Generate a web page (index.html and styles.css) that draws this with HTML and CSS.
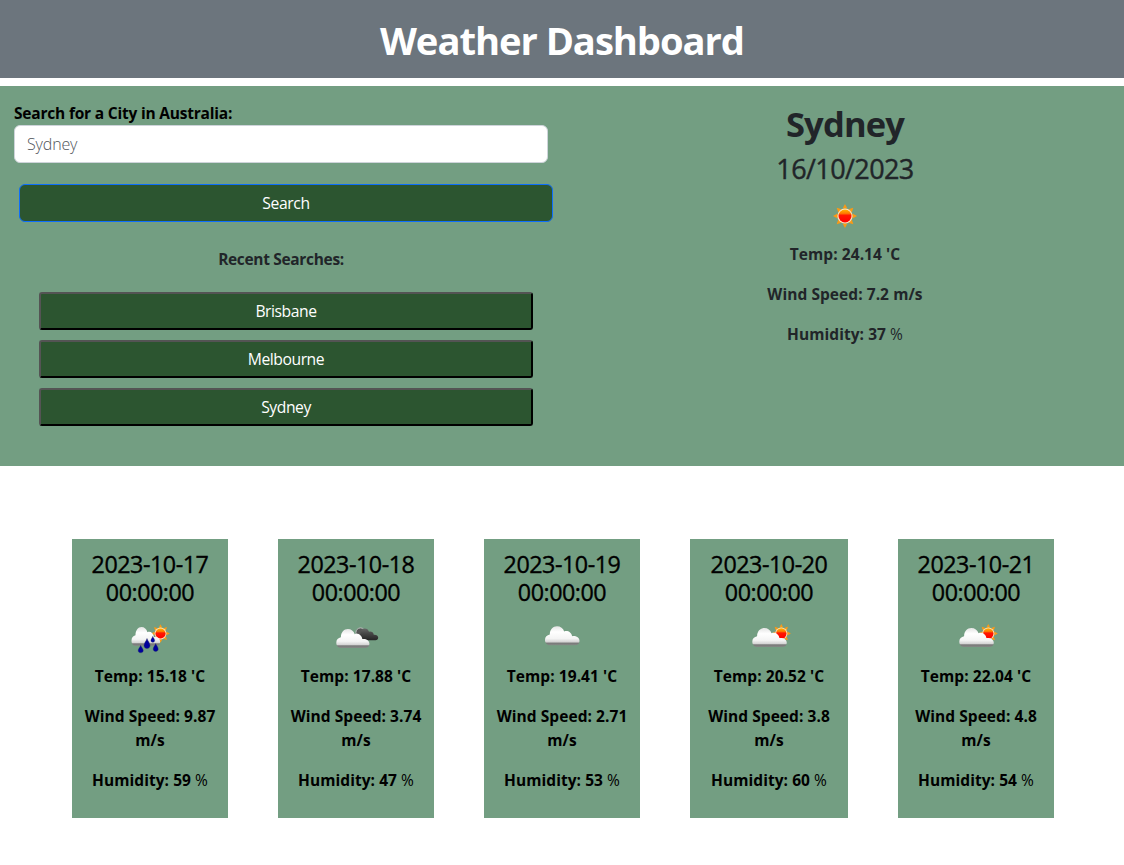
FILE: index.html
```html
<!DOCTYPE html>
<html lang="en">
<head>
<meta charset="utf-8">
<title>Weather Dashboard</title>
<link rel="stylesheet" href="styles.css">
</head>
<body>
<svg class="defs" width="0" height="0" aria-hidden="true">
  <defs>
    <linearGradient id="white" x1="0" y1="0" x2="0" y2="1"><stop offset="0" stop-color="#e4e4e4"/><stop offset=".3" stop-color="#fff"/><stop offset=".65" stop-color="#f4f4f4"/><stop offset=".84" stop-color="#d2d2d2"/><stop offset=".88" stop-color="#777"/><stop offset="1" stop-color="#858a86"/></linearGradient>
    <linearGradient id="dark" x1="0" y1="0" x2="0" y2="1"><stop offset="0" stop-color="#666"/><stop offset=".4" stop-color="#484848"/><stop offset="1" stop-color="#252525"/></linearGradient>
    <linearGradient id="core" x1="0" y1="0" x2="0" y2="1"><stop offset="0" stop-color="#ffb400"/><stop offset=".3" stop-color="#ff7a00"/><stop offset=".45" stop-color="#ff1800"/><stop offset="1" stop-color="#f00"/></linearGradient>
    <g id="sun">
      <path fill="#fb9a14" d="M0-12 2.4-7.4-2.4-7.4ZM0 12 2.4 7.4-2.4 7.4ZM-12 0-7.4-2.4-7.4 2.4ZM12 0 7.4-2.4 7.4 2.4ZM-8.3-8.3-3.6-6.8-6.8-3.6ZM8.3-8.3 3.6-6.8 6.8-3.6ZM-8.3 8.3-3.6 6.8-6.8 3.6ZM8.3 8.3 3.6 6.8 6.8 3.6Z"/>
      <circle r="7.6" fill="#ffe4c0"/><circle r="6.5" fill="url(#core)"/>
    </g>
    <path id="cloud" d="M5.5 19C2 19 0 16.700 0 13.700 0 10.700 2 8.800 4.800 8.300 4.800 3.200 8 0 12 0 15.500 0 18.200 2 19.200 5.200 22.800 4 26.500 6.200 27.100 10 31 9.500 34.500 11.500 34.500 14.700 34.500 17.500 32.500 19 30 19Z"/>
    <path id="drop" fill="#00009c" stroke="#25305f" stroke-width=".4" d="M0-5C.8-2.300 3-.5 3 2 3 4 1.600 5 0 5S-3 4-3 2C-3-.5-.8-2.300 0-5Z"/>
  </defs>
</svg>
<header class="page-header"><h1 class="title">Weather Dashboard</h1></header>
<main>
  <section class="overview">
    <div class="search">
      <label class="label" for="city">Search for a City in Australia:</label>
      <input class="city-input" id="city" type="text" placeholder="Sydney">
      <button class="search-button">Search</button>
      <p class="recent-title">Recent Searches:</p>
      <div class="recent">
        <button class="recent-button">Brisbane</button>
        <button class="recent-button">Melbourne</button>
        <button class="recent-button">Sydney</button>
      </div>
    </div>
    <div class="current">
      <h2 class="city">Sydney</h2>
      <h3 class="today">16/10/2023</h3>
      <svg class="icon" viewBox="0 0 50 50"><use href="#sun" x="25" y="25"/></svg>
      <p class="fact">Temp: 24.14 'C</p>
      <p class="fact">Wind Speed: 7.2 m/s</p>
      <p class="fact">Humidity: 37 <span class="percent">%</span></p>
    </div>
  </section>
  <section class="forecast">
    <article class="card">
      <h4 class="date">2023-10-17 00:00:00</h4>
      <svg class="icon" viewBox="0 0 50 50"><use href="#sun" transform="translate(35.500 22.500) scale(.78)"/><use href="#cloud" fill="url(#white)" transform="translate(6.500 16) scale(.83 1)"/><use href="#drop" transform="translate(22 32.500)"/><use href="#drop" transform="translate(15.700 38) scale(.85 .75)"/><use href="#drop" transform="translate(30.700 36.500) scale(.85 .8)"/><use href="#drop" transform="translate(27.800 28.200) scale(.65 .6)"/></svg>
      <p class="fact">Temp: 15.18 'C</p>
      <p class="fact">Wind Speed: 9.87 m/s</p>
      <p class="fact">Humidity: 59 <span class="percent">%</span></p>
    </article>
    <article class="card">
      <h4 class="date">2023-10-18 00:00:00</h4>
      <svg class="icon" viewBox="0 0 50 50"><circle cx="29.500" cy="21.500" r="4.600" fill="#555" stroke="#bbb"/><use href="#cloud" fill="url(#dark)" transform="translate(26.500 17.500) scale(.6 .62)"/><use href="#cloud" fill="url(#white)" transform="translate(5.300 18) scale(.96 1)"/></svg>
      <p class="fact">Temp: 17.88 'C</p>
      <p class="fact">Wind Speed: 3.74 m/s</p>
      <p class="fact">Humidity: 47 <span class="percent">%</span></p>
    </article>
    <article class="card">
      <h4 class="date">2023-10-19 00:00:00</h4>
      <svg class="icon" viewBox="0 0 50 50"><use href="#cloud" fill="url(#white)" transform="translate(8 15.200)"/></svg>
      <p class="fact">Temp: 19.41 'C</p>
      <p class="fact">Wind Speed: 2.71 m/s</p>
      <p class="fact">Humidity: 53 <span class="percent">%</span></p>
    </article>
    <article class="card card-wide">
      <h4 class="date">2023-10-20 00:00:00</h4>
      <svg class="icon" viewBox="0 0 50 50"><use href="#sun" transform="translate(37.300 22.500) scale(.8)"/><use href="#cloud" fill="url(#white)" transform="translate(8.300 17)"/></svg>
      <p class="fact">Temp: 20.52 'C</p>
      <p class="fact">Wind Speed: 3.8 m/s</p>
      <p class="fact">Humidity: 60 <span class="percent">%</span></p>
    </article>
    <article class="card">
      <h4 class="date">2023-10-21 00:00:00</h4>
      <svg class="icon" viewBox="0 0 50 50"><use href="#sun" transform="translate(37.300 22.500) scale(.8)"/><use href="#cloud" fill="url(#white)" transform="translate(8.300 17)"/></svg>
      <p class="fact">Temp: 22.04 'C</p>
      <p class="fact">Wind Speed: 4.8 m/s</p>
      <p class="fact">Humidity: 54 <span class="percent">%</span></p>
    </article>
  </section>
</main>
</body>
</html>
```
FILE: styles.css
```css
* { box-sizing: border-box; }
body { margin: 0; background: #fff; color: #212529; font: 16px/24px "Open Sans", "Noto Sans", sans-serif; }
h1, h2, h3, h4, p { margin: 0; }
.defs { position: absolute; }
.page-header { height: 78px; padding-top: 17px; background: #6c757d; text-align: center; }
.title { color: #fff; font-size: 38.2px; line-height: 46px; font-weight: 700; letter-spacing: -1.05px; }
.overview { display: flex; height: 380px; margin-top: 8px; background: #739e82; }
.search { display: flex; flex-direction: column; width: 562px; padding: 15px 9px 0 14px; }
.label { color: #000; font-size: 15.5px; font-weight: 700; letter-spacing: -.2px; }
.city-input { width: 534px; height: 38px; padding: 6px 12px; border: 1px solid #ced4da; border-radius: 6px; background: #fff; font: 300 16px/24px "Open Sans", sans-serif; letter-spacing: -.15px; }
.city-input::placeholder { color: #50545a; opacity: 1; }
.search-button { width: 534px; height: 38px; margin: 21px 0 0 5px; padding: 0; border: 1px solid #0d6efd; border-radius: 6px; background: #2c5530; color: #fff; font: 15.7px/24px "Open Sans", sans-serif; letter-spacing: -.35px; }
.recent-title { width: 534px; margin: 25px 0 21px; text-align: center; font-size: 15.5px; font-weight: 700; letter-spacing: -.33px; }
.recent { display: flex; flex-direction: column; gap: 10px; padding-left: 25px; }
.recent-button { width: 494px; height: 38px; padding: 0; border: 2px outset #000; border-radius: 3px; background: #2c5530; color: #fff; font: 15.7px/24px "Open Sans", sans-serif; letter-spacing: -.45px; }
.current { display: flex; flex-direction: column; align-items: center; width: 562px; padding: 17px 0 0 4px; }
.city { font-size: 34.5px; line-height: 42px; font-weight: 700; letter-spacing: -.85px; }
.today { margin-top: 7px; font-size: 27px; line-height: 33px; font-weight: 500; letter-spacing: -.6px; -webkit-text-stroke: .4px; }
.icon { display: block; width: 50px; height: 50px; }
.current .icon { margin: 6px 0 1px; }
.fact { font-size: 15.5px; line-height: 24px; font-weight: 700; letter-spacing: .06px; text-align: center; }
.fact + .fact { margin-top: 16px; }
.percent { font-weight: 400; }
.forecast { display: flex; gap: 50px; padding: 73px 70px 47px 72px; }
.card { display: flex; flex-direction: column; align-items: center; width: 156px; height: 279px; padding: 11px 10px 0; background: #739e82; color: #000; }
.card-wide { width: 158px; }
.date { font-size: 23.3px; line-height: 28px; font-weight: 500; letter-spacing: -.47px; text-align: center; -webkit-text-stroke: .35px; }
.card .icon { margin: 5px 0 3px; }
```
